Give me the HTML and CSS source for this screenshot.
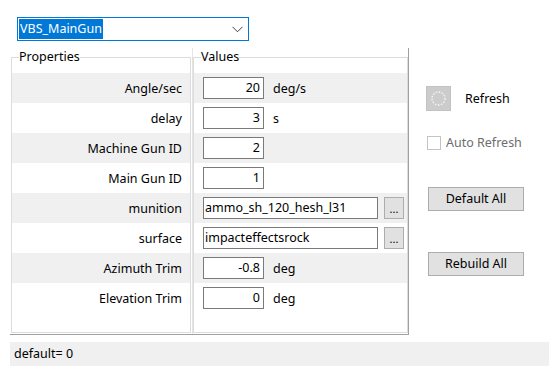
FILE: index.html
```html
<!DOCTYPE html>
<html>
<head>
<meta charset="utf-8">
<link rel="stylesheet" href="styles.css">
</head>
<body>
<div class="combo">
  <span class="sel">VBS_MainGun</span>
  <svg class="chev" width="11" height="7" viewBox="0 0 11 7"><path d="M0.5 0.8 L5.5 5.8 L10.5 0.8" fill="none" stroke="#444" stroke-width="1"/></svg>
</div>
<div class="main">
  <div class="grid">
    <fieldset class="group props">
      <legend>Properties</legend>
      <div class="row alt">Angle/sec</div>
      <div class="row">delay</div>
      <div class="row alt">Machine Gun ID</div>
      <div class="row">Main Gun ID</div>
      <div class="row alt">munition</div>
      <div class="row">surface</div>
      <div class="row alt">Azimuth Trim</div>
      <div class="row">Elevation Trim</div>
    </fieldset>
    <div class="splitter"></div>
    <fieldset class="group vals">
      <legend>Values</legend>
      <div class="row alt"><span class="tb num">20</span><span class="unit">deg/s</span></div>
      <div class="row"><span class="tb num">3</span><span class="unit">s</span></div>
      <div class="row alt"><span class="tb num">2</span></div>
      <div class="row"><span class="tb num">1</span></div>
      <div class="row alt"><span class="tb wide">ammo_sh_120_hesh_l31</span><span class="dots">...</span></div>
      <div class="row"><span class="tb wide">impacteffectsrock</span><span class="dots">...</span></div>
      <div class="row alt"><span class="tb num">-0.8</span><span class="unit">deg</span></div>
      <div class="row"><span class="tb num">0</span><span class="unit">deg</span></div>
    </fieldset>
  </div>
  <div class="side">
    <div class="refresh">
      <span class="ricon"><svg width="17" height="17" viewBox="0 0 17 17"><circle cx="8.5" cy="8.5" r="6.5" fill="none" stroke="#f4f4f4" stroke-width="1.4" stroke-dasharray="1.6 1.4"/></svg></span>
      <span class="rlabel">Refresh</span>
    </div>
    <div class="auto">
      <span class="cb"></span>
      <span class="alabel">Auto Refresh</span>
    </div>
    <div class="btn b1">Default All</div>
    <div class="btn b2">Rebuild All</div>
  </div>
</div>
<div class="status">default= 0</div>
</body>
</html>
```
FILE: styles.css
```css
html, body {
  margin: 0;
  padding: 0;
  background: #ffffff;
}
body {
  font-family: "Noto Sans", "Open Sans", sans-serif;
  font-size: 12px;
  color: #000;
  width: 549px;
  height: 366px;
  overflow: hidden;
}
.combo {
  margin: 17px 0 0 17px;
  width: 232px;
  height: 24px;
  box-sizing: border-box;
  border: 1px solid #0078d7;
  display: flex;
  align-items: center;
  justify-content: space-between;
  padding: 0 5px 0 1px;
}
.sel {
  background: #0078d7;
  color: #fff;
  height: 20px;
  line-height: 20px;
  padding: 0 1px;
  font-size: 12.5px;
}
.chev { display: block; }
.main {
  display: flex;
  margin-top: 7px;
  padding-left: 10px;
}
.grid {
  width: 399px;
  height: 287px;
  box-sizing: border-box;
  display: flex;
  padding-left: 1px;
  border-right: 1px solid #a0a0a0;
  border-bottom: 1px solid #a0a0a0;
}
.group {
  margin: 0 0 1px 0;
  padding: 7px 0 0 0;
  border: 1px solid #dcdcdc;
  min-width: 0;
  box-sizing: border-box;
}
.group legend {
  margin-left: 7px;
  padding: 0;
  line-height: 18px;
  font-size: 12.5px;
}
.props { width: 180px; }
.vals { flex: 1; }
.splitter {
  width: 1px;
  border-right: 1px solid #e4e4e4;
}
.row {
  height: 30px;
  display: flex;
  align-items: center;
  box-sizing: border-box;
  font-size: 12.5px;
}
.row.alt { background: #f0f0f0; }
.props .row {
  justify-content: flex-end;
  padding-right: 8px;
}
.vals .row { padding-left: 9px; }
.tb {
  height: 22px;
  box-sizing: border-box;
  border: 1px solid #7a7a7a;
  background: #fff;
  line-height: 20px;
  display: block;
}
.num {
  width: 61px;
  text-align: right;
  padding-right: 3px;
}
.wide {
  width: 175px;
  padding-left: 1px;
}
.unit { margin-left: 9px; }
.dots {
  margin-left: 6px;
  width: 20px;
  height: 22px;
  box-sizing: border-box;
  background: #e1e1e1;
  border: 1px solid #adadad;
  text-align: center;
  line-height: 22px;
  font-size: 11px;
}
.side {
  margin-left: 17px;
  display: flex;
  flex-direction: column;
  align-items: flex-start;
}
.refresh {
  margin-top: 38px;
  display: flex;
  align-items: center;
}
.ricon {
  width: 25px;
  height: 25px;
  box-sizing: border-box;
  background: #cccccc;
  border: 1px solid #c2c2c2;
  display: flex;
  align-items: center;
  justify-content: center;
}
.ricon svg { display: block; }
.rlabel {
  margin-left: 14px;
  font-size: 12.5px;
}
.auto {
  margin-top: 23px;
  margin-left: 1px;
  height: 17px;
  display: flex;
  align-items: center;
}
.cb {
  width: 14px;
  height: 14px;
  box-sizing: border-box;
  border: 1px solid #c4c4c4;
  background: #fff;
}
.alabel {
  margin-left: 5px;
  color: #6d6d6d;
  font-size: 12.5px;
}
.btn {
  margin-left: 2px;
  width: 96px;
  height: 24px;
  box-sizing: border-box;
  background: #e1e1e1;
  border: 1px solid #adadad;
  text-align: center;
  line-height: 22px;
  font-size: 12.5px;
}
.b1 { margin-top: 36px; }
.b2 { margin-top: 41px; }
.status {
  margin: 7px 0 0 10px;
  height: 24px;
  background: #f0f0f0;
  padding-left: 4px;
  line-height: 24px;
  font-size: 12.5px;
}
```
